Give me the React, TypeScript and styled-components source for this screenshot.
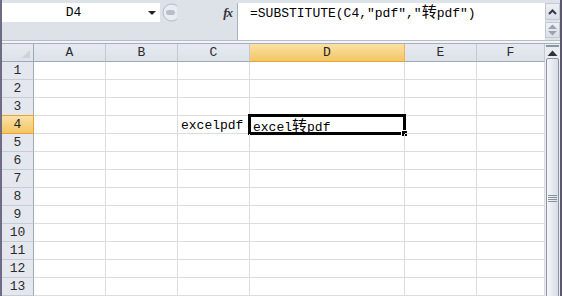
import React from "react";
import styled, { createGlobalStyle, css } from "styled-components";

const GlobalStyle = createGlobalStyle`
  html, body { margin: 0; padding: 0; background: #ffffff; }
  body { font-family: "Liberation Mono", "Noto Sans CJK SC", monospace; }
`;

const Window = styled.div`
  width: 562px;
  height: 296px;
  overflow: hidden;
  box-sizing: border-box;
  border-left: 2px solid #6f6b84;
  border-right: 2px solid #5b586c;
  background: #dde1e8;
  display: flex;
  flex-direction: column;
  font-family: "Liberation Mono", "Noto Sans CJK SC", monospace;
  font-size: 13px;
  color: #000;
`;

const FormulaBar = styled.div`
  display: flex;
  height: 40px;
  padding-top: 3px;
  box-sizing: border-box;
  background: #dde1e8;
`;

const NameArea = styled.div`
  width: 235px;
  display: flex;
  flex-direction: column;
  border-right: 1px solid #a9b1bd;
`;

const NameRow = styled.div`
  height: 19px;
  display: flex;
  align-items: center;
`;

const NameBox = styled.div`
  width: 158px;
  height: 19px;
  background: #fff;
  display: flex;
  align-items: center;
`;

const NameText = styled.div`
  width: 143px;
  text-align: center;
  line-height: 19px;
`;

const DropArrow = styled.div`
  width: 0;
  height: 0;
  border-left: 4px solid transparent;
  border-right: 4px solid transparent;
  border-top: 4px solid #222;
  margin-left: 3px;
`;

const Fx = styled.div`
  margin-left: auto;
  margin-right: 5px;
  font-family: "Liberation Serif", serif;
  font-style: italic;
  font-weight: bold;
  font-size: 13px;
  color: #333;
  letter-spacing: -1px;
`;

const FormulaInput = styled.div`
  flex: 1;
  background: #fff;
  padding-left: 12px;
  line-height: 19px;
  white-space: nowrap;
`;

const Han = styled.span`
  font-family: "Noto Sans CJK SC", sans-serif;
  font-size: 15px;
  line-height: 1;
`;

const SideButtons = styled.div`
  width: 15px;
  display: flex;
  flex-direction: column;
  gap: 2px;
`;

const SideButton = styled.div<{ $h: number }>`
  height: ${(p) => p.$h}px;
  background: linear-gradient(to bottom, #eef0f4, #dadfe6);
  border: 1px solid #c3c9d2;
  box-sizing: border-box;
  display: flex;
  align-items: center;
  justify-content: center;
`;

const Separator = styled.div`
  height: 4px;
  box-sizing: border-box;
  border-top: 1px solid #b7bec8;
  border-bottom: 1px solid #a7afba;
  background: #f2f4f7;
`;

const Body = styled.div`
  flex: 1;
  display: flex;
  min-height: 0;
  background: #fff;
`;

const Sheet = styled.div`
  width: 543px;
  display: grid;
  grid-template-columns: 32px 72px 72px 72px 155px 72px 68px;
  grid-auto-rows: 18px;
  align-content: start;
`;

const Cell = styled.div`
  position: relative;
  box-sizing: border-box;
  border-right: 1px solid #dadcdf;
  border-bottom: 1px solid #dadcdf;
  padding: 1px 0 0 3px;
  line-height: 17px;
  white-space: nowrap;
`;

const activeHeader = css`
  background: linear-gradient(to bottom, #fbe0a6, #f4c663);
  color: #222;
`;

const ColHeader = styled.div<{ $active?: boolean }>`
  box-sizing: border-box;
  background: linear-gradient(to bottom, #e6eaf0, #dde2ea);
  border-right: 1px solid #c2c9d3;
  border-bottom: 1px solid #9ea8b6;
  text-align: center;
  line-height: 18px;
  color: #2b2b2b;
  ${(p) =>
    p.$active &&
    css`
      ${activeHeader};
      border-bottom-color: #e6a33a;
      border-right-color: #e9b656;
    `}
`;

const Corner = styled(ColHeader)`
  position: relative;
  border-right-color: #9ea8b6;
  &::after {
    content: "";
    position: absolute;
    right: 3px;
    bottom: 3px;
    border-left: 8px solid transparent;
    border-bottom: 8px solid #cdd2d9;
  }
`;

const RowHeader = styled.div<{ $active?: boolean }>`
  box-sizing: border-box;
  background: #e4e8ee;
  border-right: 1px solid #9ea8b6;
  border-bottom: 1px solid #c6ccd5;
  text-align: center;
  line-height: 18px;
  color: #2b2b2b;
  ${(p) =>
    p.$active &&
    css`
      ${activeHeader};
      border-right-color: #e6a33a;
      border-bottom-color: #e6a33a;
      border-top: 1px solid #e6a33a;
      margin-top: -1px;
    `}
`;

const Selection = styled.div`
  position: absolute;
  left: -2px;
  top: -2px;
  right: -2px;
  bottom: -2px;
  border: 3px solid #000;
  pointer-events: none;
  &::after {
    content: "";
    position: absolute;
    right: -5px;
    bottom: -5px;
    width: 5px;
    height: 5px;
    background: #000;
    border: 1px solid #fff;
  }
`;

const VScroll = styled.div`
  width: 15px;
  display: flex;
  flex-direction: column;
  align-items: center;
  background: #e9ecf1;
  overflow: hidden;
`;

const SplitBox = styled.div`
  width: 11px;
  height: 4px;
  margin-top: 1px;
  border: 1px solid #8b94a1;
  background: #fff;
`;

const ArrowButton = styled.div`
  height: 15px;
  margin-top: 3px;
  display: flex;
  align-items: center;
  justify-content: center;
`;

const Thumb = styled.div`
  width: 13px;
  height: 282px;
  margin-top: 2px;
  flex-shrink: 0;
  box-sizing: border-box;
  border: 1px solid #8c94a0;
  border-radius: 2px;
  background: linear-gradient(to right, #f5f7fa, #e3e7ed 60%, #d8dde5);
  display: flex;
  align-items: center;
  justify-content: center;
`;

const columns = ["A", "B", "C", "D", "E", "F"];
const rows = Array.from({ length: 13 }, (_, i) => i + 1);

const cellText: Record<string, React.ReactNode> = {
  C4: "excelpdf",
  D4: (
    <>
      excel<Han>转</Han>pdf
    </>
  ),
};

// the half-hidden round knob between the name box and fx
const Knob = () => (
  <svg width="16" height="19" viewBox="0 0 16 19" style={{ marginLeft: 1 }}>
    <circle cx="10.5" cy="9.5" r="8.5" fill="#e9ecf0" stroke="#b3b9c2" />
    <rect x="5" y="7" width="9" height="5" rx="2.5" fill="#b9bfc8" />
  </svg>
);

const App: React.FC = () => {
  return (
    <>
      <GlobalStyle />
      <Window>
        <FormulaBar>
          <NameArea>
            <NameRow>
              <NameBox>
                <NameText>D4</NameText>
                <DropArrow />
              </NameBox>
              <Knob />
              <Fx>fx</Fx>
            </NameRow>
          </NameArea>
          <FormulaInput>
            =SUBSTITUTE(C4,"pdf","<Han>转</Han>pdf")
          </FormulaInput>
          <SideButtons>
            <SideButton $h={17}>
              <svg width="9" height="6" viewBox="0 0 9 6">
                <path d="M1 5 L4.5 1.5 L8 5" fill="none" stroke="#3a3550" strokeWidth="2" />
              </svg>
            </SideButton>
            <SideButton $h={16}>
              <svg width="11" height="12" viewBox="0 0 11 12">
                <path d="M1 5 L5.5 0.5 L10 5 Z" fill="#9aa2ad" />
                <path d="M1 7 L5.5 11.5 L10 7 Z" fill="#9aa2ad" />
              </svg>
            </SideButton>
          </SideButtons>
        </FormulaBar>
        <Separator />
        <Body>
          <Sheet>
            <Corner />
            {columns.map((c) => (
              <ColHeader key={c} $active={c === "D"}>
                {c}
              </ColHeader>
            ))}
            {rows.map((r) => (
              <React.Fragment key={r}>
                <RowHeader $active={r === 4}>{r}</RowHeader>
                {columns.map((c) => {
                  const id = `${c}${r}`;
                  return (
                    <Cell key={id}>
                      {cellText[id]}
                      {id === "D4" && <Selection />}
                    </Cell>
                  );
                })}
              </React.Fragment>
            ))}
          </Sheet>
          <VScroll>
            <SplitBox />
            <ArrowButton>
              <svg width="11" height="6" viewBox="0 0 11 6">
                <path d="M0.5 6 L5.5 0.5 L10.5 6 Z" fill="#2f3340" />
              </svg>
            </ArrowButton>
            <Thumb>
              <svg width="9" height="8" viewBox="0 0 9 8">
                {[0.5, 2.5, 4.5, 6.5].map((y) => (
                  <line key={y} x1="0" x2="9" y1={y} y2={y} stroke="#8a929e" />
                ))}
              </svg>
            </Thumb>
          </VScroll>
        </Body>
      </Window>
    </>
  );
};

export default App;
